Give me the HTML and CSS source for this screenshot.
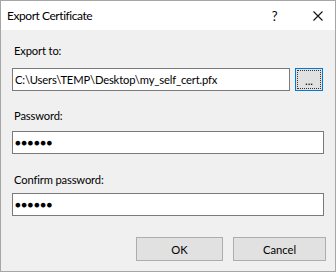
FILE: index.html
```html
<!DOCTYPE html>
<html>
<head>
<meta charset="utf-8">
<link rel="stylesheet" href="styles.css">
</head>
<body>
<div class="window">
  <div class="titlebar">
    <span class="title">Export Certificate</span>
    <span class="help">?</span>
    <span class="close"><svg width="10" height="10" viewBox="0 0 10 10"><path d="M0.5 0.5L9.5 9.5M9.5 0.5L0.5 9.5" stroke="#111" stroke-width="1.1" fill="none"/></svg></span>
  </div>
  <div class="content">
    <div class="label label-export">Export to:</div>
    <div class="row field-export">
      <div class="input">C:\Users\TEMP\Desktop\my_self_cert.pfx</div>
      <button class="browse"><span class="focus">...</span></button>
    </div>
    <div class="label label-pass">Password:</div>
    <div class="input secret field-pass">●●●●●●</div>
    <div class="label label-confirm">Confirm password:</div>
    <div class="input secret field-confirm">●●●●●●</div>
    <div class="actions">
      <button class="btn btn-ok">OK</button>
      <button class="btn btn-cancel">Cancel</button>
    </div>
  </div>
</div>
</body>
</html>
```
FILE: styles.css
```css
* { box-sizing: border-box; }
html, body { margin: 0; padding: 0; }
body {
  width: 336px;
  height: 272px;
  font-family: Lato, "Liberation Sans", sans-serif;
  font-size: 11.2px;
  letter-spacing: -0.15px;
  color: #000;
  background: #fff;
}
.window {
  width: 336px;
  height: 272px;
  border: 1px solid #a6a6a6;
  display: flex;
  flex-direction: column;
}
.titlebar {
  height: 29px;
  background: #fff;
  display: flex;
  align-items: center;
  padding-left: 6px;
  line-height: 16px;
  font-size: 12px;
  letter-spacing: -0.45px;
}
.title { flex: 1; }
.help {
  font-size: 13px;
  margin-right: 36px;
}
.close {
  display: flex;
  margin-right: 12px;
}
.content {
  flex: 1;
  background: #f0f0f0;
  padding: 13px 11px 0 11px;
  display: flex;
  flex-direction: column;
}
.label {
  line-height: 16px;
  height: 16px;
  padding-left: 2px;
}
.row {
  display: flex;
  gap: 5px;
}
.input {
  height: 23px;
  border: 1px solid #7a7a7a;
  background: #fff;
  line-height: 21px;
  padding-left: 2px;
  white-space: nowrap;
  overflow: hidden;
}
.row .input { width: 278px; }
.browse {
  width: 28px;
  height: 23px;
  border: 1px solid #0078d7;
  background: #e1e1e1;
  padding: 1px;
  margin: 0;
  font: inherit;
  letter-spacing: 0;
  display: flex;
}
.focus {
  flex: 1;
  border: 1px dotted #333;
  display: flex;
  align-items: center;
  justify-content: center;
  line-height: 16px;
  padding-top: 3px;
}
.secret {
  font-size: 9.5px;
  letter-spacing: 0.6px;
  line-height: 21px;
  padding-left: 2px;
}
.field-export { margin-top: 9px; }
.label-pass { margin-top: 17px; }
.field-pass { margin-top: 7px; }
.label-confirm { margin-top: 18px; }
.field-confirm { margin-top: 5px; }
.actions {
  margin-top: 21px;
  display: flex;
  justify-content: flex-end;
  gap: 10px;
  margin-right: -2px;
}
.btn {
  height: 24px;
  border: 1px solid #adadad;
  background: #e1e1e1;
  font: inherit;
  margin: 0;
  padding: 0;
}
.btn-ok { width: 87px; }
.btn-cancel { width: 93px; }
```
